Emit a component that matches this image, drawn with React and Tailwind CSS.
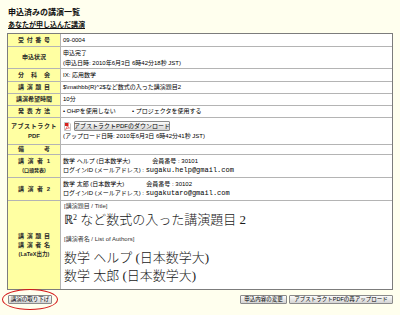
import React from "react";

function Row({ h, first, label, children, labelClass = "", valueClass = "" }) {
  return (
    <div className={`flex ${h} ${first ? "" : "border-t border-[#b4b4b4]"}`}>
      <div className={`w-[53px] shrink-0 bg-[#ffffa2] border-r border-[#b4b4b4] flex flex-col items-center justify-center font-bold text-[#2a2a2a] ${labelClass}`}>
        {label}
      </div>
      <div className={`flex-1 pl-[2px] flex flex-col justify-center text-[#000] ${valueClass}`}>
        {children}
      </div>
    </div>
  );
}

function J({ children, w = "w-[32px]" }) {
  return <div className={`${w} [text-align-last:justify] text-justify leading-[9px]`}>{children}</div>;
}

function Btn({ children, className = "" }) {
  return (
    <div className={`h-[9px] flex items-center justify-center border border-[#8a8a8a] rounded-[1px] bg-gradient-to-b from-[#fbfbfb] to-[#d4d4d4] text-[5.5px] leading-[7px] text-black whitespace-nowrap ${className}`}>
      {children}
    </div>
  );
}

function PdfIcon() {
  return (
    <svg width="7" height="9" viewBox="0 0 7 9" className="shrink-0">
      <path d="M0.5 0.5 H5 L6.5 2 V8.5 H0.5 Z" fill="#fff" stroke="#9a9a9a" strokeWidth="0.6" />
      <path d="M1 1 H4.5 V4 H1 Z" fill="#d8201b" />
      <path d="M1.5 7.5 C3 5 4 3 3.2 2.2 C2.4 1.6 2.6 4 5.5 6 C4 6 2.5 6.5 1.5 7.5 Z" fill="none" stroke="#d8201b" strokeWidth="0.6" />
    </svg>
  );
}

export default function App() {
  const big = "text-[13px] leading-[18px] text-[#1a1a1a] font-light font-['Liberation_Serif','Noto_Sans_CJK_JP',serif]";
  return (
    <div className="w-[400px] h-[315px] overflow-hidden bg-[#ffffee] font-['Liberation_Sans','Noto_Sans_CJK_JP',sans-serif] text-[6px] leading-[9px]">
      <div className="pt-[8px] px-[7px]">
        <div className="text-[8px] leading-[9px] font-bold text-[#111] pl-[1px]">申込済みの講演一覧</div>
        <div className="mt-[4px] text-[7px] leading-[8px] font-bold text-[#111] underline pl-[1px]">あなたが申し込んだ講演</div>

        <div className="mt-[4px] w-[386px] border border-[#7c7c7c] bg-white">
          <Row first h="h-[12px]" label={<J>受付番号</J>}>
            <div>09-0004</div>
          </Row>
          <Row h="h-[22px]" label={<div className="leading-[9px]">申込状況</div>}>
            <div className="leading-[10px]">申込完了</div>
            <div className="leading-[10px]">(申込日時: 2010年6月3日 6時42分18秒 JST)</div>
          </Row>
          <Row h="h-[13px]" label={<J>分科会</J>}>
            <div>IX: 応用数学</div>
          </Row>
          <Row h="h-[12px]" label={<J>講演題目</J>}>
            <div>$\mathbb&#123;R&#125;^2$など数式の入った講演題目2</div>
          </Row>
          <Row h="h-[12px]" label={<div className="leading-[9px]">講演希望時間</div>}>
            <div>10分</div>
          </Row>
          <Row h="h-[12px]" label={<J>発表方法</J>}>
            <div className="flex">
              <span className="w-[69px]">• OHPを使用しない</span>
              <span>• プロジェクタを使用する</span>
            </div>
          </Row>
          <Row
            h="h-[27px]"
            label={
              <>
                <div className="leading-[10px] tracking-[0.6px]">アブストラクト</div>
                <div className="leading-[10px]">PDF</div>
              </>
            }
          >
            <div className="flex items-center gap-[3px] h-[10px] pl-[1px]">
              <PdfIcon />
              <Btn className="w-[96px] h-[10px] text-[6px]">アブストラクトPDFのダウンロード</Btn>
            </div>
            <div className="mt-[1px] leading-[9px]">(アップロード日時: 2010年6月3日 6時42分41秒 JST)</div>
          </Row>
          <Row h="h-[10px]" label={<J>備考</J>}>
            <div></div>
          </Row>
          <Row
            h="h-[23px]"
            label={
              <>
                <J>講演者1</J>
                <div className="text-[5px] leading-[9px]">(口頭発表)</div>
              </>
            }
          >
            <div className="flex leading-[9px]">
              <span>数学 ヘルプ (日本数学大)</span>
              <span className="ml-[22px]">会員番号 : 30101</span>
            </div>
            <div className="leading-[9px]">
              ログインID (メールアドレス) : <span className="font-['Liberation_Mono',monospace] text-[7px]">sugaku.help@gmail.com</span>
            </div>
          </Row>
          <Row h="h-[23px]" label={<J>講演者2</J>}>
            <div className="flex leading-[9px]">
              <span>数学 太郎 (日本数学大)</span>
              <span className="ml-[22px]">会員番号 : 30102</span>
            </div>
            <div className="leading-[9px]">
              ログインID (メールアドレス) : <span className="font-['Liberation_Mono',monospace] text-[7px]">sugakutaro@gmail.com</span>
            </div>
          </Row>
          <Row
            h="h-[89px]"
            valueClass="!justify-start pt-[1px] pl-[3px]"
            label={
              <>
                <J>講演題目</J>
                <J>講演者名</J>
                <div className="text-[5.5px] leading-[9px]">(LaTeX出力)</div>
              </>
            }
          >
            <div className="leading-[9px] text-[#333]">[講演題目 / Title]</div>
            <div className={big}>
              ℝ<sup className="text-[8px]">2</sup> など数式の入った講演題目 2
            </div>
            <div className="mt-[6px] leading-[9px] text-[#333]">[講演者名 / List of Authors]</div>
            <div className={`mt-[5px] ${big}`}>数学 ヘルプ (日本数学大)</div>
            <div className={big}>数学 太郎 (日本数学大)</div>
          </Row>
        </div>

        <div className="mt-[5px] w-[386px] flex items-start">
          <div className="relative ml-[1px]">
            <Btn className="w-[44px]">講演の取り下げ</Btn>
            <div className="absolute left-[-6px] top-[-6px] w-[56px] h-[21px] rounded-[50%] border-[1.5px] border-[#d41818]"></div>
          </div>
          <div className="ml-auto flex gap-[2px]">
            <Btn className="w-[47px]">申込内容の変更</Btn>
            <Btn className="w-[104px]">アブストラクトPDFの再アップロード</Btn>
          </div>
        </div>
      </div>
    </div>
  );
}
